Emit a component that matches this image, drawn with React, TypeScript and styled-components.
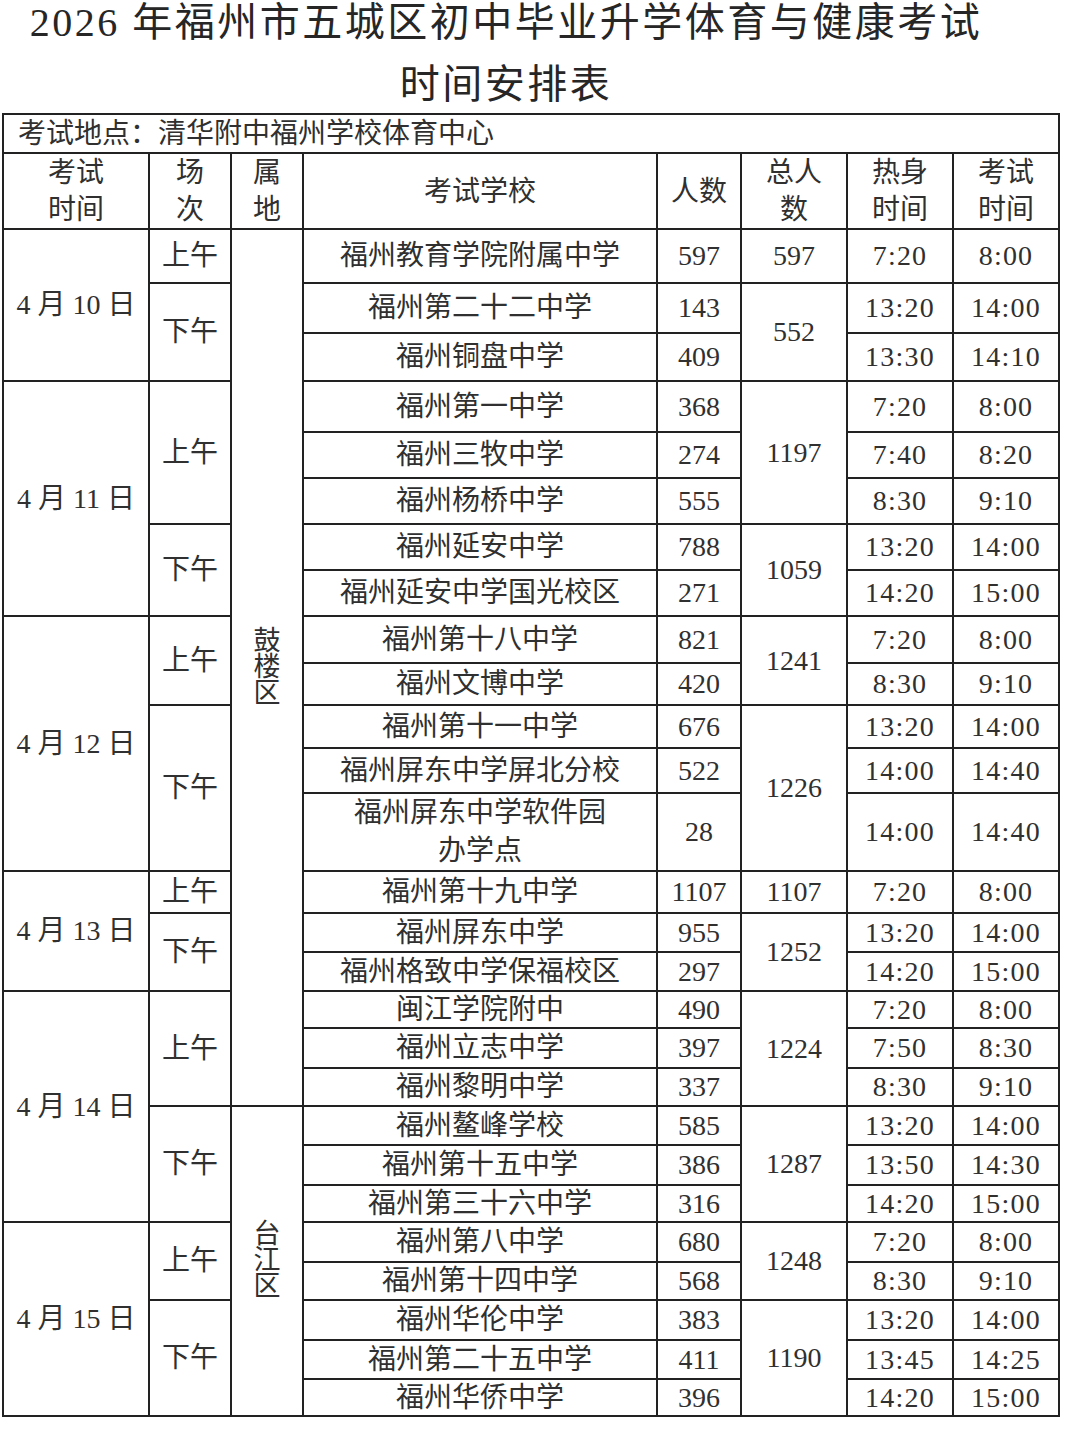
import styled, { createGlobalStyle } from 'styled-components'

const GlobalStyle = createGlobalStyle`
    html, body {
        margin: 0;
        padding: 0;
        background: #fff;
    }
    body {
        font-family: "Liberation Serif", "Noto Sans CJK SC", serif;
        color: #303030;
    }
`

type Span = { text: string; span: number }

type RowData = {
    h: number
    date?: Span
    session?: Span
    district?: Span
    school: string
    count: string
    total?: Span
    warm: string
    exam: string
}

const widths = [146, 82, 72, 354, 84, 106, 106, 106]

const rows: RowData[] = [
    { h: 54, date: { text: '4 月 10 日', span: 3 }, session: { text: '上午', span: 1 }, district: { text: '鼓楼区', span: 19 }, school: '福州教育学院附属中学', count: '597', total: { text: '597', span: 1 }, warm: '7:20', exam: '8:00' },
    { h: 50, session: { text: '下午', span: 2 }, school: '福州第二十二中学', count: '143', total: { text: '552', span: 2 }, warm: '13:20', exam: '14:00' },
    { h: 48, school: '福州铜盘中学', count: '409', warm: '13:30', exam: '14:10' },
    { h: 51, date: { text: '4 月 11 日', span: 5 }, session: { text: '上午', span: 3 }, school: '福州第一中学', count: '368', total: { text: '1197', span: 3 }, warm: '7:20', exam: '8:00' },
    { h: 46, school: '福州三牧中学', count: '274', warm: '7:40', exam: '8:20' },
    { h: 46, school: '福州杨桥中学', count: '555', warm: '8:30', exam: '9:10' },
    { h: 46, session: { text: '下午', span: 2 }, school: '福州延安中学', count: '788', total: { text: '1059', span: 2 }, warm: '13:20', exam: '14:00' },
    { h: 46, school: '福州延安中学国光校区', count: '271', warm: '14:20', exam: '15:00' },
    { h: 47, date: { text: '4 月 12 日', span: 5 }, session: { text: '上午', span: 2 }, school: '福州第十八中学', count: '821', total: { text: '1241', span: 2 }, warm: '7:20', exam: '8:00' },
    { h: 42, school: '福州文博中学', count: '420', warm: '8:30', exam: '9:10' },
    { h: 43, session: { text: '下午', span: 3 }, school: '福州第十一中学', count: '676', total: { text: '1226', span: 3 }, warm: '13:20', exam: '14:00' },
    { h: 45, school: '福州屏东中学屏北分校', count: '522', warm: '14:00', exam: '14:40' },
    { h: 75, school: '福州屏东中学软件园\n办学点', count: '28', warm: '14:00', exam: '14:40' },
    { h: 42, date: { text: '4 月 13 日', span: 3 }, session: { text: '上午', span: 1 }, school: '福州第十九中学', count: '1107', total: { text: '1107', span: 1 }, warm: '7:20', exam: '8:00' },
    { h: 39, session: { text: '下午', span: 2 }, school: '福州屏东中学', count: '955', total: { text: '1252', span: 2 }, warm: '13:20', exam: '14:00' },
    { h: 39, school: '福州格致中学保福校区', count: '297', warm: '14:20', exam: '15:00' },
    { h: 37, date: { text: '4 月 14 日', span: 6 }, session: { text: '上午', span: 3 }, school: '闽江学院附中', count: '490', total: { text: '1224', span: 3 }, warm: '7:20', exam: '8:00' },
    { h: 40, school: '福州立志中学', count: '397', warm: '7:50', exam: '8:30' },
    { h: 38, school: '福州黎明中学', count: '337', warm: '8:30', exam: '9:10' },
    { h: 39, session: { text: '下午', span: 3 }, district: { text: '台江区', span: 8 }, school: '福州鳌峰学校', count: '585', total: { text: '1287', span: 3 }, warm: '13:20', exam: '14:00' },
    { h: 40, school: '福州第十五中学', count: '386', warm: '13:50', exam: '14:30' },
    { h: 37, school: '福州第三十六中学', count: '316', warm: '14:20', exam: '15:00' },
    { h: 40, date: { text: '4 月 15 日', span: 5 }, session: { text: '上午', span: 2 }, school: '福州第八中学', count: '680', total: { text: '1248', span: 2 }, warm: '7:20', exam: '8:00' },
    { h: 38, school: '福州第十四中学', count: '568', warm: '8:30', exam: '9:10' },
    { h: 40, session: { text: '下午', span: 3 }, school: '福州华伦中学', count: '383', total: { text: '1190', span: 3 }, warm: '13:20', exam: '14:00' },
    { h: 39, school: '福州第二十五中学', count: '411', warm: '13:45', exam: '14:25' },
    { h: 37, school: '福州华侨中学', count: '396', warm: '14:20', exam: '15:00' },
]

const App = () => {
    return (
        <Page>
            <GlobalStyle />
            <Title>
                <TitleLine>2026 年福州市五城区初中毕业升学体育与健康考试</TitleLine>
                <TitleLine>时间安排表</TitleLine>
            </Title>
            <Sheet>
                <colgroup>
                    {widths.map((w, i) => <Col key={i} $w={w} />)}
                </colgroup>
                <thead>
                    <LocationRow>
                        <Location colSpan={8}>考试地点：清华附中福州学校体育中心</Location>
                    </LocationRow>
                    <HeadRow>
                        <HeadCell>考试<br />时间</HeadCell>
                        <HeadCell>场<br />次</HeadCell>
                        <HeadCell>属<br />地</HeadCell>
                        <HeadCell>考试学校</HeadCell>
                        <HeadCell>人数</HeadCell>
                        <HeadCell>总人<br />数</HeadCell>
                        <HeadCell>热身<br />时间</HeadCell>
                        <HeadCell>考试<br />时间</HeadCell>
                    </HeadRow>
                </thead>
                <tbody>
                    {rows.map((r, i) => (
                        <BodyRow key={i} $h={r.h}>
                            {r.date && <DateCell rowSpan={r.date.span}>{r.date.text}</DateCell>}
                            {r.session && <Cell rowSpan={r.session.span}>{r.session.text}</Cell>}
                            {r.district && (
                                <Cell rowSpan={r.district.span}>
                                    <Vertical>{r.district.text}</Vertical>
                                </Cell>
                            )}
                            <SchoolCell $multi={r.school.includes('\n')}>{r.school}</SchoolCell>
                            <Cell>{r.count}</Cell>
                            {r.total && <Cell rowSpan={r.total.span}>{r.total.text}</Cell>}
                            <TimeCell>{r.warm}</TimeCell>
                            <TimeCell>{r.exam}</TimeCell>
                        </BodyRow>
                    ))}
                </tbody>
            </Sheet>
        </Page>
    )
}

export default App


const Page = styled.div`
    width: 1080px;
    min-height: 1455px;
`

const Title = styled.h1`
    margin: 0;
    width: 1012px;
    padding-bottom: 5px;
    display: flex;
    flex-direction: column;
    align-items: center;
    gap: 16px;
    font-size: 40px;
    font-weight: 400;
    color: #262626;
`

const TitleLine = styled.div`
    height: 46px;
    line-height: 46px;
    letter-spacing: 2.5px;
    white-space: nowrap;
`

const Sheet = styled.table`
    margin-left: 2px;
    width: 1056px;
    table-layout: fixed;
    border-collapse: collapse;
    border: 2px solid #222;
    font-size: 28px;
    td, th {
        border: 2px solid #222;
        padding: 0;
        text-align: center;
        vertical-align: middle;
        font-weight: 400;
        line-height: 30px;
    }
`

const Col = styled.col<{ $w: number }>`
    width: ${p => p.$w}px;
`

const LocationRow = styled.tr`
    height: 39px;
`

const Location = styled.td`
    && {
        text-align: left;
        padding-left: 14px;
    }
`

const HeadRow = styled.tr`
    height: 76px;
`

const HeadCell = styled.th`
    && {
        line-height: 37px;
    }
`

const BodyRow = styled.tr<{ $h: number }>`
    height: ${p => p.$h}px;
`

const Cell = styled.td``

const DateCell = styled.td`
    white-space: nowrap;
`

const SchoolCell = styled.td<{ $multi: boolean }>`
    white-space: pre-line;
    && {
        line-height: ${p => (p.$multi ? 38 : 30)}px;
    }
`

const TimeCell = styled.td`
    letter-spacing: 1.2px;
`

const Vertical = styled.span`
    display: inline-block;
    width: 1em;
    font-size: 27px;
    line-height: 26px;
    word-break: break-all;
`
